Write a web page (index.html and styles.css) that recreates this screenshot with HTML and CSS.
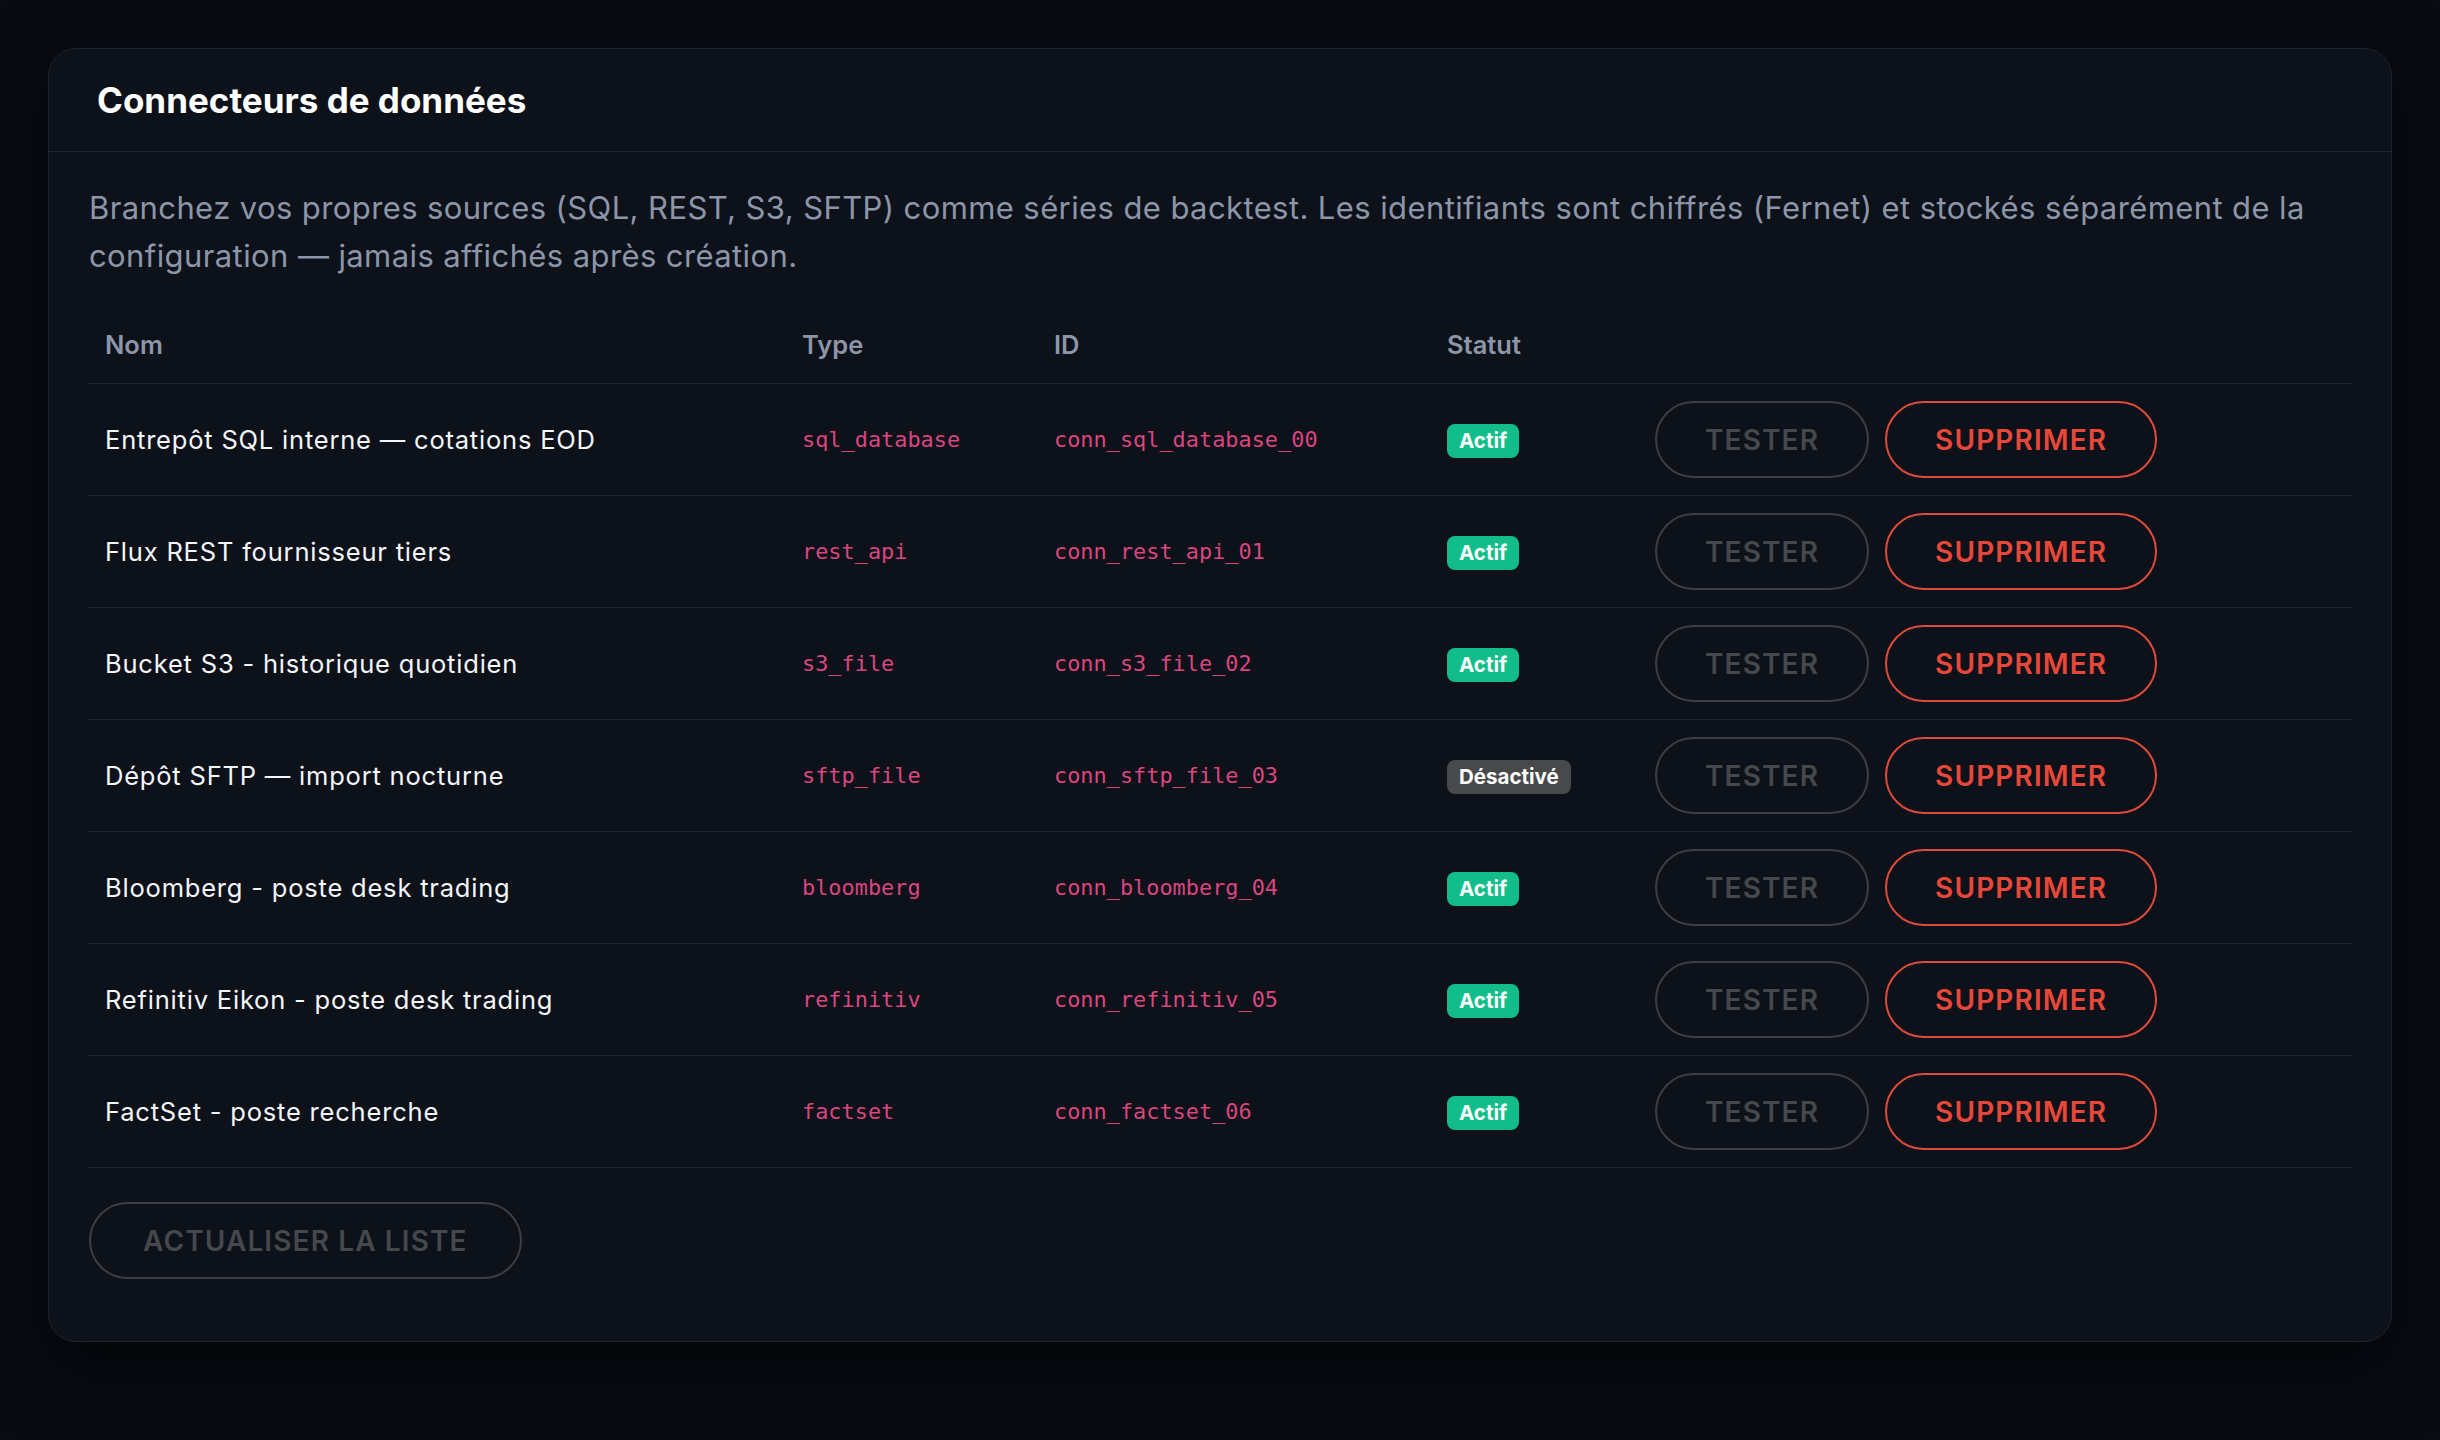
FILE: index.html
```html
<!DOCTYPE html>
<html>

<head>
<meta charset="utf-8">
<link rel="stylesheet" href="styles.css">
</head>

<body>
<div class="card">

<div class="card-head">
<h1>Connecteurs de données</h1>
</div>

<div class="card-body">

<p class="intro">Branchez vos propres sources (SQL, REST, S3, SFTP) comme séries de backtest. Les identifiants sont chiffrés (Fernet) et stockés séparément de la configuration — jamais affichés après création.</p>

<table class="connectors">
<thead>
<tr>
<th class="col-name">Nom</th>
<th class="col-type">Type</th>
<th class="col-id">ID</th>
<th class="col-status">Statut</th>
<th></th>
</tr>
</thead>
<tbody>
<tr>
<td>Entrepôt SQL interne — cotations EOD</td>
<td class="mono">sql_database</td>
<td class="mono">conn_sql_database_00</td>
<td><span class="badge on">Actif</span></td>
<td class="actions"><button class="btn ghost">Tester</button><button class="btn danger">Supprimer</button></td>
</tr>
<tr>
<td>Flux REST fournisseur tiers</td>
<td class="mono">rest_api</td>
<td class="mono">conn_rest_api_01</td>
<td><span class="badge on">Actif</span></td>
<td class="actions"><button class="btn ghost">Tester</button><button class="btn danger">Supprimer</button></td>
</tr>
<tr>
<td>Bucket S3 - historique quotidien</td>
<td class="mono">s3_file</td>
<td class="mono">conn_s3_file_02</td>
<td><span class="badge on">Actif</span></td>
<td class="actions"><button class="btn ghost">Tester</button><button class="btn danger">Supprimer</button></td>
</tr>
<tr>
<td>Dépôt SFTP — import nocturne</td>
<td class="mono">sftp_file</td>
<td class="mono">conn_sftp_file_03</td>
<td><span class="badge off">Désactivé</span></td>
<td class="actions"><button class="btn ghost">Tester</button><button class="btn danger">Supprimer</button></td>
</tr>
<tr>
<td>Bloomberg - poste desk trading</td>
<td class="mono">bloomberg</td>
<td class="mono">conn_bloomberg_04</td>
<td><span class="badge on">Actif</span></td>
<td class="actions"><button class="btn ghost">Tester</button><button class="btn danger">Supprimer</button></td>
</tr>
<tr>
<td>Refinitiv Eikon - poste desk trading</td>
<td class="mono">refinitiv</td>
<td class="mono">conn_refinitiv_05</td>
<td><span class="badge on">Actif</span></td>
<td class="actions"><button class="btn ghost">Tester</button><button class="btn danger">Supprimer</button></td>
</tr>
<tr>
<td>FactSet - poste recherche</td>
<td class="mono">factset</td>
<td class="mono">conn_factset_06</td>
<td><span class="badge on">Actif</span></td>
<td class="actions"><button class="btn ghost">Tester</button><button class="btn danger">Supprimer</button></td>
</tr>
</tbody>
</table>

<button class="btn ghost refresh">Actualiser la liste</button>

</div>

</div>
</body>
</html>
```

FILE: styles.css
```css
body {
    margin: 0;
    padding: 48px 48px 96px 48px;
    background: #080b12;
    font-family: Inter, 'Noto Sans', sans-serif;
    color: #f1f4f8;
}

.card {
    border: 1px solid #1f242e;
    border-radius: 28px;
    background: #0d1119;
    box-shadow: 0 24px 70px rgba(0, 0, 0, 0.55);
}

.card-head {
    height: 102px;
    display: flex;
    align-items: center;
    padding: 0 48px;
    border-bottom: 1px solid #1f242e;
}

.card-head h1 {
    margin: 0;
    font-size: 35px;
    font-weight: 700;
    color: #ffffff;
}

.card-body {
    padding: 32px 40px 62px 40px;
}

.intro {
    margin: 0 0 27px 0;
    font-size: 31px;
    letter-spacing: 0.4px;
    line-height: 48px;
    color: #8c96a8;
}

.connectors {
    width: 100%;
    border-collapse: collapse;
}

.connectors th {
    text-align: left;
    padding: 20px 16px;
    font-size: 25.5px;
    line-height: 36px;
    font-weight: 600;
    color: #8c96a8;
    border-bottom: 1px solid #1f242e;
}

.col-name   { width: 665px; }
.col-type   { width: 220px; }
.col-id     { width: 361px; }
.col-status { width: 176px; }

.connectors td {
    padding: 17px 16px;
    font-size: 25.5px;
    letter-spacing: 0.8px;
    line-height: 36px;
    color: #f4f6f9;
    vertical-align: middle;
    border-bottom: 1px solid #1f242e;
}

.connectors td.mono {
    font-family: 'DejaVu Sans Mono', monospace;
    font-size: 21.9px;
    letter-spacing: 0;
    color: #d9467f;
}

.badge {
    display: inline-block;
    padding: 0 12px;
    height: 34px;
    line-height: 34px;
    border-radius: 8px;
    font-size: 20.5px;
    font-weight: 700;
    letter-spacing: 0;
    color: #ffffff;
    vertical-align: middle;
}

.badge.on {
    background: #12bd8a;
}

.badge.off {
    background: #48494b;
}

.actions {
    white-space: nowrap;
}

.btn {
    height: 77px;
    padding: 0 48px;
    margin-right: 16px;
    border-radius: 40px;
    background: transparent;
    font-family: Inter, 'Noto Sans', sans-serif;
    font-size: 28px;
    font-weight: 600;
    letter-spacing: 0.04em;
    text-transform: uppercase;
    vertical-align: middle;
}

.btn.ghost {
    border: 2px solid #3b3e43;
    color: #45484c;
}

.btn.danger {
    border: 2px solid #e04a3c;
    color: #e8483a;
}

.refresh {
    margin-top: 34px;
    padding: 0 52px;
}
```
